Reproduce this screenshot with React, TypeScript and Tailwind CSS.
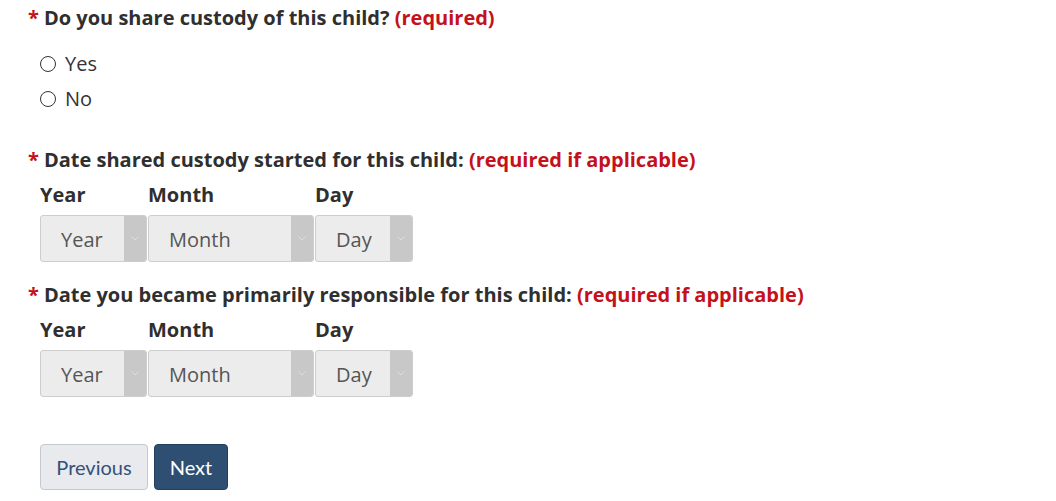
import React from 'react';

const Required = ({ children }: { children: React.ReactNode }) => (
  <span className="text-[#c4111b]">{children}</span>
);

const Heading = ({ text, note, className = '' }: { text: string; note: string; className?: string }) => (
  <h2 className={`text-[20px] leading-[24px] font-bold text-[#2f2f2f] ${className}`}>
    <span className="text-[#c4111b] mr-[5px]">*</span>
    {text} <Required>{note}</Required>
  </h2>
);

const Radio = ({ label }: { label: string }) => (
  <label className="flex items-center h-[24px] text-[20px] text-[#333]">
    <span className="w-[16px] h-[16px] rounded-full border border-[#333] bg-white mr-[9px] ml-[12px]" />
    {label}
  </label>
);

const FakeSelect = ({ value, width }: { value: string; width: string }) => (
  <div
    className={`${width} h-[47px] flex rounded-[3px] border border-[#cdcdcd] bg-[#ececec] overflow-hidden`}
  >
    <div className="flex-1 flex items-center pl-[20px] pt-[2px] text-[20px] text-[#555]">{value}</div>
    <div className="w-[22px] bg-[#c8c8c8] flex items-center justify-center">
      <svg width="8" height="5" viewBox="0 0 8 5" fill="none">
        <path d="M0.5 0.5 L4 4 L7.5 0.5" stroke="#dedede" strokeWidth="1" />
      </svg>
    </div>
  </div>
);

const DateFields = () => (
  <div className="ml-[12px]">
    <div className="flex gap-[1px] text-[20px] leading-[24px] font-bold text-[#2f2f2f]">
      <div className="w-[107px]">Year</div>
      <div className="w-[166px]">Month</div>
      <div className="w-[98px]">Day</div>
    </div>
    <div className="flex gap-[1px] mt-[8px]">
      <FakeSelect value="Year" width="w-[107px]" />
      <FakeSelect value="Month" width="w-[166px]" />
      <FakeSelect value="Day" width="w-[98px]" />
    </div>
  </div>
);

const App = () => {
  return (
    <div
      className="w-[1056px] h-[501px] bg-white pl-[28px] pt-[6px]"
      style={{ fontFamily: '"Open Sans", sans-serif' }}
    >
      <Heading text="Do you share custody of this child?" note="(required)" />
      <div className="mt-[22px] flex flex-col gap-[11px]">
        <Radio label="Yes" />
        <Radio label="No" />
      </div>

      <Heading
        className="mt-[37px]"
        text="Date shared custody started for this child:"
        note="(required if applicable)"
      />
      <div className="mt-[11px]">
        <DateFields />
      </div>

      <Heading
        className="mt-[21px]"
        text="Date you became primarily responsible for this child:"
        note="(required if applicable)"
      />
      <div className="mt-[11px]">
        <DateFields />
      </div>

      <div className="mt-[47px] ml-[12px] flex gap-[6px]" style={{ fontFamily: 'Lato, sans-serif' }}>
        <button className="w-[108px] h-[46px] rounded-[4px] border border-[#c5c8cc] bg-[#e8eaed] text-[20px] text-[#34507a]">
          Previous
        </button>
        <button className="w-[74px] h-[46px] rounded-[4px] border border-[#233f5e] bg-[#2f4f72] text-[20px] text-white">
          Next
        </button>
      </div>
    </div>
  );
};

export default App;
